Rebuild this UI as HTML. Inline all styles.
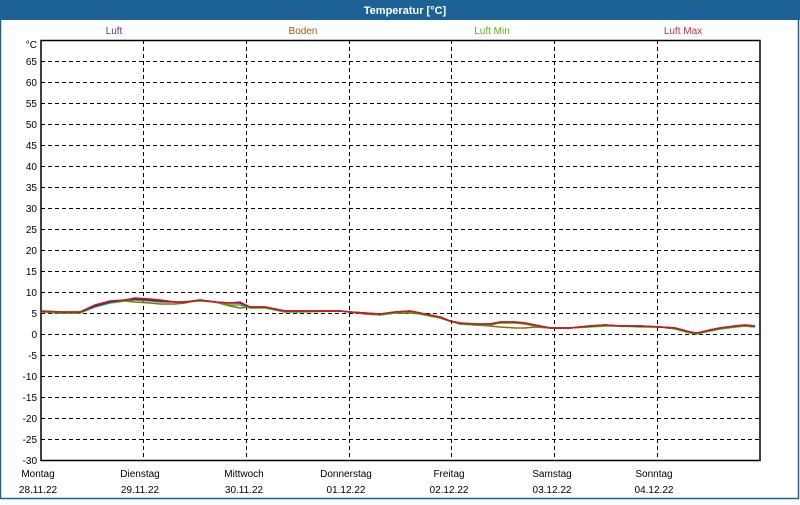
<!DOCTYPE html>
<html><head><meta charset="utf-8"><style>
body{margin:0;width:800px;height:500px;overflow:hidden;background:#fff;font-family:"Liberation Sans",sans-serif}
</style></head><body>
<svg width="800" height="500" xmlns="http://www.w3.org/2000/svg" font-family="Liberation Sans, sans-serif" font-size="10">
<rect x="0" y="0" width="800" height="500" fill="#fff"/>
<rect x="0" y="0" width="800" height="20" fill="#1d6296"/>
<rect x="0.5" y="0.5" width="798" height="498" fill="none" stroke="#1d6296" stroke-width="1.5"/>
<text x="405" y="14" text-anchor="middle" fill="#fff" font-weight="bold" font-size="11">Temperatur [°C]</text>
<text x="114" y="34" text-anchor="middle" fill="#5030c0">Luft</text>
<text x="303" y="34" text-anchor="middle" fill="#a05a10">Boden</text>
<text x="492" y="34" text-anchor="middle" fill="#60b010">Luft Min</text>
<text x="683" y="34" text-anchor="middle" fill="#c03040">Luft Max</text>
<g stroke="#000" stroke-width="1" stroke-dasharray="4,3" fill="none">
<path d="M41 61.5H760M41 82.5H760M41 103.5H760M41 124.5H760M41 145.5H760M41 166.5H760M41 187.5H760M41 208.5H760M41 229.5H760M41 250.5H760M41 271.5H760M41 292.5H760M41 313.5H760M41 334.5H760M41 355.5H760M41 376.5H760M41 397.5H760M41 418.5H760M41 439.5H760"/>
<path d="M143.5 40V460M246.5 40V460M349.5 40V460M451.5 40V460M554.5 40V460M657.5 40V460"/>
</g>
<rect x="41" y="40.5" width="719" height="420" fill="none" stroke="#000" stroke-width="1.5"/>
<g font-size="10" fill="#000" text-anchor="end">
<text x="37" y="48">°C</text>
<text x="37" y="65">65</text><text x="37" y="86">60</text><text x="37" y="107">55</text><text x="37" y="128">50</text><text x="37" y="149">45</text><text x="37" y="170">40</text><text x="37" y="191">35</text><text x="37" y="212">30</text><text x="37" y="233">25</text><text x="37" y="254">20</text><text x="37" y="275">15</text><text x="37" y="296">10</text><text x="37" y="317">5</text><text x="37" y="338">0</text><text x="37" y="359">-5</text><text x="37" y="380">-10</text><text x="37" y="401">-15</text><text x="37" y="422">-20</text><text x="37" y="443">-25</text><text x="37" y="464">-30</text>
</g>
<g font-size="10" fill="#000" text-anchor="middle">
<text x="38" y="477">Montag</text><text x="38" y="493">28.11.22</text>
<text x="140" y="477">Dienstag</text><text x="140" y="493">29.11.22</text>
<text x="244" y="477">Mittwoch</text><text x="244" y="493">30.11.22</text>
<text x="346" y="477">Donnerstag</text><text x="346" y="493">01.12.22</text>
<text x="449" y="477">Freitag</text><text x="449" y="493">02.12.22</text>
<text x="552" y="477">Samstag</text><text x="552" y="493">03.12.22</text>
<text x="654" y="477">Sonntag</text><text x="654" y="493">04.12.22</text>
</g>
<g fill="none" stroke-width="1.5">
<polyline stroke="#a06010" points="41,312 60,313 80,313 95,306 110,302 125,301 135,302 150,303 160,304 175,304 185,303 200,300 215,302 230,306 240,308 250,307 265,307 275,309 285,311 300,311 340,311 350,312 365,314 380,315 395,313 410,313 420,314 440,318 450,321 460,324 475,325 490,326 500,327 515,328 525,328 535,327 550,328 570,328 590,326 605,325 620,326 640,326 660,327 675,328 690,332 697,333 710,331 720,329 735,327 745,326 755,327"/>
<polyline stroke="#20c020" points="41,312 60,313 80,313 95,307 110,303 125,301 135,300 150,301 160,302 175,302 185,302 200,301 215,302 230,305 240,305 250,308 265,308 275,310 285,312 300,312 340,311 350,312 365,313 380,315 395,313 410,312 420,314 440,318 450,321 460,324 475,325 490,325 500,323 515,323 525,324 535,326 550,328 570,328 590,327 605,326 620,326 640,327 660,327 675,329 690,333 697,334 710,331 720,329 735,327 745,326 755,327"/>
<polyline stroke="#2020d0" points="41,311 60,312 80,312 95,306 110,302 125,300 135,299 150,300 160,301 175,302 185,302 200,300 215,302 230,303 240,303 250,307 265,307 275,309 285,311 300,311 340,311 350,312 365,313 380,314 395,312 410,311 420,313 440,317 450,321 460,323 475,324 490,324 500,322 515,322 525,323 535,325 550,328 570,328 590,326 605,325 620,326 640,326 660,327 675,328 690,332 697,333 710,330 720,328 735,326 745,325 755,326"/>
<polyline stroke="#e01010" points="41,311 60,312 80,312 95,305 110,301 125,300 135,298 150,299 160,300 175,302 185,302 200,300 215,302 230,303 240,302 250,307 265,307 275,309 285,311 300,311 340,311 350,312 365,313 380,314 395,312 410,311 420,313 440,317 450,321 460,323 475,324 490,324 500,322 515,322 525,323 535,325 550,328 570,328 590,326 605,325 620,326 640,326 660,327 675,328 690,332 697,333 710,330 720,328 735,326 745,325 755,326"/>
</g>
</svg>
</body></html>
